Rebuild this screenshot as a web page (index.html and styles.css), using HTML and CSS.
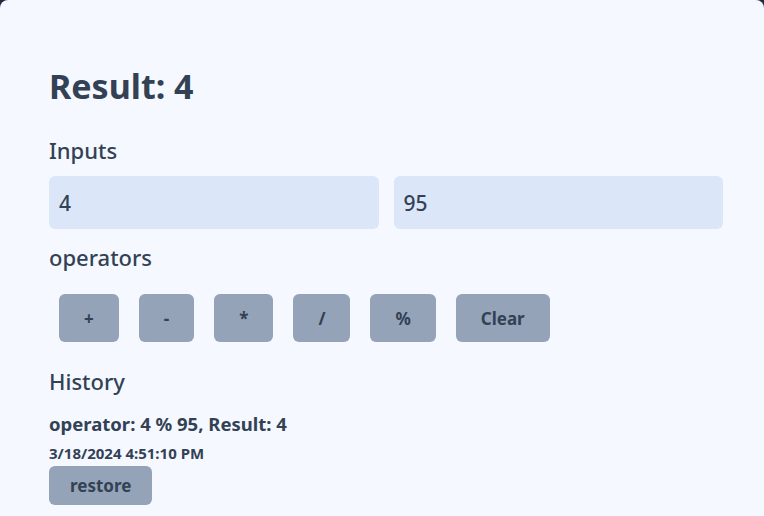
FILE: index.html
```html
<!DOCTYPE html>
<html>
<head>
<meta charset="utf-8">
<link rel="stylesheet" href="styles.css">
</head>
<body>
<div class="card">
  <h1 class="result">Result: 4</h1>
  <h2 class="label">Inputs</h2>
  <div class="inputs">
    <input class="field" type="text" value="4">
    <input class="field" type="text" value="95">
  </div>
  <h2 class="label">operators</h2>
  <div class="ops">
    <button class="btn op">+</button>
    <button class="btn op">-</button>
    <button class="btn op">*</button>
    <button class="btn op">/</button>
    <button class="btn op">%</button>
    <button class="btn op">Clear</button>
  </div>
  <h2 class="label history">History</h2>
  <div class="entry">
    <p class="entry-text">operator: 4 % 95, Result: 4</p>
    <p class="entry-date">3/18/2024 4:51:10 PM</p>
    <button class="btn restore">restore</button>
  </div>
</div>
</body>
</html>
```
FILE: styles.css
```css
html, body {
  margin: 0;
  padding: 0;
  height: 100%;
  background: #1e293b;
  font-family: "Noto Sans", "Open Sans", sans-serif;
  color: #334155;
}
.card {
  background: #f5f9ff;
  border-radius: 8px 8px 0 0;
  min-height: 100%;
  box-sizing: border-box;
  padding: 62px 41px 0 49px;
}
.result {
  margin: 0 0 24px 0;
  font-size: 34px;
  line-height: 48px;
  font-weight: 700;
}
.label {
  margin: 0 0 10px 0;
  font-size: 22px;
  line-height: 32px;
  font-weight: 500;
}
.inputs {
  display: flex;
  gap: 15px;
  margin-bottom: 12px;
}
.field {
  flex: 1;
  min-width: 0;
  height: 53px;
  box-sizing: border-box;
  border: none;
  border-radius: 6px;
  background: #dbe7f9;
  padding: 0 10px;
  font-family: inherit;
  font-size: 21px;
  font-weight: 500;
  color: #334155;
  outline: none;
}
.ops {
  display: flex;
  margin: 0 0 23px 0;
  padding-top: 11px;
}
.btn {
  border: none;
  background: #94a3b8;
  color: #334155;
  font-family: inherit;
  font-weight: 700;
  font-size: 17px;
  border-radius: 6px;
  cursor: pointer;
}
.op {
  margin: 0 10px;
  height: 48px;
  padding: 0 25px;
}
.history {
  margin-bottom: 13px;
}
.entry-text {
  margin: 0;
  font-size: 18.5px;
  font-weight: 700;
  line-height: 28px;
}
.entry-date {
  margin: 4px 0 0 0;
  font-size: 15px;
  font-weight: 700;
  line-height: 22px;
}
.restore {
  height: 39px;
  padding: 0 21px;
  margin-top: 2px;
}
```
